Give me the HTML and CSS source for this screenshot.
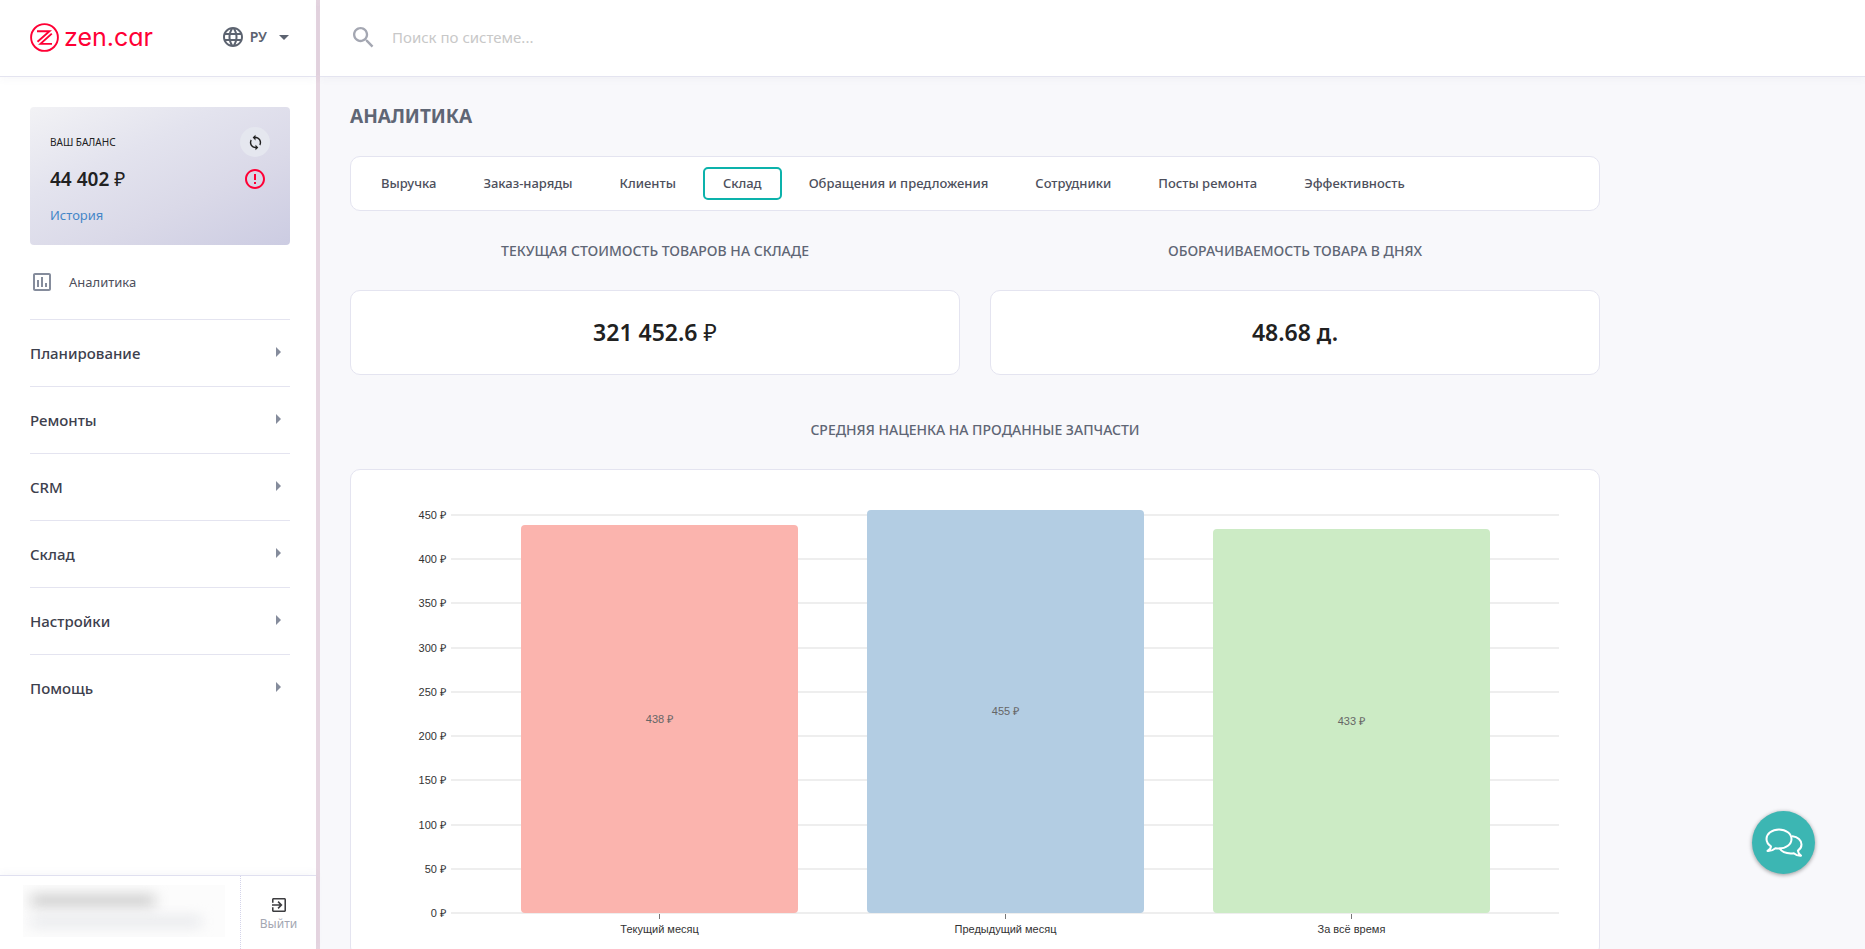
FILE: index.html
```html
<!DOCTYPE html>
<html lang="ru">
<head>
<meta charset="utf-8">
<meta name="viewport" content="width=device-width, initial-scale=1">
<title>Аналитика — zen.car</title>
<link rel="stylesheet" href="styles.css">
</head>
<body>
<div class="app">
  <aside class="sidebar">
    <header class="brand-bar">
      <a class="logo" href="#">
        <svg class="logo-mark" viewBox="0 0 29 29" fill="none" stroke="currentColor" stroke-width="1.9" aria-hidden="true">
          <circle cx="14.5" cy="14.5" r="13.4"/>
          <path d="M7 8.200H19.500L7.500 18.800M21.800 10.600L10.500 20.900H22"/>
        </svg>
        <span class="logo-text">zen.car</span>
      </a>
      <button class="lang" type="button">
        <svg class="lang-globe" viewBox="2 2 20 20" fill="currentColor" aria-hidden="true"><path d="M11.99 2C6.47 2 2 6.48 2 12s4.47 10 9.99 10C17.52 22 22 17.52 22 12S17.52 2 11.99 2zm6.93 6h-2.95c-.32-1.25-.78-2.45-1.38-3.56 1.84.63 3.37 1.91 4.33 3.56zM12 4.04c.83 1.2 1.48 2.53 1.91 3.96h-3.82c.43-1.43 1.08-2.76 1.91-3.96zM4.26 14C4.1 13.36 4 12.69 4 12s.1-1.36.26-2h3.38c-.08.66-.14 1.32-.14 2s.06 1.34.14 2H4.26zm.82 2h2.95c.32 1.25.78 2.45 1.38 3.56-1.84-.63-3.37-1.9-4.33-3.56zm2.95-8H5.08c.96-1.66 2.49-2.93 4.33-3.56C8.81 5.55 8.35 6.75 8.03 8zM12 19.96c-.83-1.2-1.48-2.53-1.91-3.96h3.82c-.43 1.43-1.08 2.76-1.91 3.96zM14.34 14H9.66c-.09-.66-.16-1.32-.16-2s.07-1.35.16-2h4.68c.09.65.16 1.32.16 2s-.07 1.34-.16 2zm.25 5.56c.6-1.11 1.06-2.31 1.38-3.56h2.95c-.96 1.65-2.49 2.93-4.33 3.56zM16.36 14c.08-.66.14-1.32.14-2s-.06-1.34-.14-2h3.38c.16.64.26 1.31.26 2s-.1 1.36-.26 2h-3.38z"/></svg>
        <span>РУ</span>
        <svg class="lang-caret" viewBox="0 0 10 5" fill="currentColor" aria-hidden="true"><path d="M0 0h10L5 5z"/></svg>
      </button>
    </header>

    <section class="balance">
      <div class="balance-row">
        <span class="balance-label">ВАШ БАЛАНС</span>
        <button class="refresh" type="button" aria-label="Обновить">
          <svg viewBox="0 0 24 24" fill="currentColor" aria-hidden="true"><path d="M12 4V1L8 5l4 4V6c3.31 0 6 2.69 6 6 0 1.01-.25 1.97-.7 2.8l1.46 1.46C19.54 15.03 20 13.57 20 12c0-4.42-3.58-8-8-8zm0 14c-3.31 0-6-2.69-6-6 0-1.01.25-1.97.7-2.8L5.24 7.74C4.46 8.97 4 10.43 4 12c0 4.42 3.58 8 8 8v3l4-4-4-4v3z"/></svg>
        </button>
      </div>
      <div class="balance-row">
        <strong class="balance-sum">44 402 <span class="rub">₽</span></strong>
        <svg class="alert" viewBox="2 2 20 20" fill="currentColor" aria-hidden="true"><path d="M11 15h2v2h-2zm0-8h2v6h-2zm.99-5C6.47 2 2 6.48 2 12s4.47 10 9.99 10C17.52 22 22 17.52 22 12S17.52 2 11.99 2zM12 20c-4.42 0-8-3.58-8-8s3.58-8 8-8 8 3.58 8 8-3.58 8-8 8z"/></svg>
      </div>
      <a class="history" href="#">История</a>
    </section>

    <nav class="menu">
      <a class="menu-current" href="#">
        <svg viewBox="3 3 18 18" fill="currentColor" aria-hidden="true"><path d="M19 3H5c-1.1 0-2 .9-2 2v14c0 1.1.9 2 2 2h14c1.1 0 2-.9 2-2V5c0-1.100-.9-2-2-2zm0 16H5V5h14v14zM7 10h2v7H7zm4-3h2v10h-2zm4 6h2v4h-2z"/></svg>
        <span>Аналитика</span>
      </a>
      <button class="menu-item" type="button"><span>Планирование</span><i class="arrow"></i></button>
      <button class="menu-item" type="button"><span>Ремонты</span><i class="arrow"></i></button>
      <button class="menu-item" type="button"><span>CRM</span><i class="arrow"></i></button>
      <button class="menu-item" type="button"><span>Склад</span><i class="arrow"></i></button>
      <button class="menu-item" type="button"><span>Настройки</span><i class="arrow"></i></button>
      <button class="menu-item" type="button"><span>Помощь</span><i class="arrow"></i></button>
    </nav>

    <footer class="account">
      <div class="account-user">
        <div class="hidden-name"></div>
        <div class="hidden-mail"></div>
      </div>
      <button class="logout" type="button">
        <svg viewBox="3 3 18 18" fill="currentColor" aria-hidden="true"><path d="M10.090 15.590L11.500 17l5-5-5-5-1.410 1.410L12.670 11H3v2h9.670l-2.580 2.590zM19 3H5c-1.110 0-2 .9-2 2v4h2V5h14v14H5v-4H3v4c0 1.100.89 2 2 2h14c1.100 0 2-.9 2-2V5c0-1.100-.9-2-2-2z"/></svg>
        <span>Выйти</span>
      </button>
    </footer>
  </aside>

  <div class="content">
    <header class="search-bar">
      <label class="search">
        <svg viewBox="3 3 18 18" fill="currentColor" aria-hidden="true"><path d="M15.500 14h-.79l-.28-.27C15.410 12.590 16 11.110 16 9.500 16 5.910 13.090 3 9.500 3S3 5.910 3 9.500 5.910 16 9.500 16c1.610 0 3.090-.59 4.230-1.570l.27.28v.79l5 4.990L20.490 19l-4.990-5zm-6 0C7.010 14 5 11.990 5 9.500S7.010 5 9.500 5 14 7.010 14 9.500 11.990 14 9.500 14z"/></svg>
        <input type="search" placeholder="Поиск по системе..." aria-label="Поиск по системе">
      </label>
    </header>

    <main class="page">
      <h1>АНАЛИТИКА</h1>
      <nav class="tabs panel">
        <a class="tab" href="#">Выручка</a>
        <a class="tab" href="#">Заказ-наряды</a>
        <a class="tab" href="#">Клиенты</a>
        <a class="tab tab-active" href="#">Склад</a>
        <a class="tab" href="#">Обращения и предложения</a>
        <a class="tab" href="#">Сотрудники</a>
        <a class="tab" href="#">Посты ремонта</a>
        <a class="tab" href="#">Эффективность</a>
      </nav>

      <div class="stats">
        <section>
          <h2>ТЕКУЩАЯ СТОИМОСТЬ ТОВАРОВ НА СКЛАДЕ</h2>
          <p class="stat panel">321 452.6 <span class="rub">₽</span></p>
        </section>
        <section>
          <h2>ОБОРАЧИВАЕМОСТЬ ТОВАРА В ДНЯХ</h2>
          <p class="stat panel">48.68 д.</p>
        </section>
      </div>

      <section class="markup">
        <h2>СРЕДНЯЯ НАЦЕНКА НА ПРОДАННЫЕ ЗАПЧАСТИ</h2>
        <div class="chart panel">
          <div class="plot">
            <div class="grid-row"><span>450 ₽</span></div>
            <div class="grid-row"><span>400 ₽</span></div>
            <div class="grid-row"><span>350 ₽</span></div>
            <div class="grid-row"><span>300 ₽</span></div>
            <div class="grid-row"><span>250 ₽</span></div>
            <div class="grid-row"><span>200 ₽</span></div>
            <div class="grid-row"><span>150 ₽</span></div>
            <div class="grid-row"><span>100 ₽</span></div>
            <div class="grid-row"><span>50 ₽</span></div>
            <div class="grid-row grid-zero"><span>0 ₽</span></div>
            <div class="bars">
              <div class="bar bar-red" style="height:97.33%">438 ₽</div>
              <div class="bar bar-blue" style="height:101.11%">455 ₽</div>
              <div class="bar bar-green" style="height:96.22%">433 ₽</div>
            </div>
          </div>
          <div class="axis">
            <span>Текущий месяц</span>
            <span>Предыдущий месяц</span>
            <span>За всё время</span>
          </div>
        </div>
      </section>
    </main>
  </div>

  <button class="chat" type="button" aria-label="Чат">
    <svg viewBox="0 0 38 30" fill="none" stroke="currentColor" stroke-width="2" stroke-linejoin="round" stroke-linecap="round" aria-hidden="true">
      <path d="M14 1.500C7 1.500 1.500 5.800 1.500 11c0 3 1.800 5.600 4.500 7.300-.2 1.900-1.500 3.600-3.500 4.700 3 .2 5.800-.9 7.900-2.800 1.200.3 2.400.4 3.600.4 7 0 12.500-4.200 12.500-9.600S21 1.500 14 1.500z"/>
      <path d="M27.500 8.300c5.200.6 9 4 9 8.200 0 2.500-1.400 4.700-3.600 6.200.2 2 1.300 3.800 3.100 5-2.800.2-5.300-.8-7.200-2.500-1 .2-2 .3-3 .3-5 0-9.300-1.900-11-4.900"/>
    </svg>
  </button>
</div>
</body>
</html>
```
FILE: styles.css
```css
* { box-sizing: border-box; }

body {
  margin: 0;
  font-family: "Noto Sans", "Open Sans", sans-serif;
  font-size: 13px;
  line-height: 20px;
  color: #212121;
  background: #f8f8fb;
}

h1, h2, p { margin: 0; }
a { color: inherit; text-decoration: none; }
svg { display: block; flex: none; }

button {
  font: inherit;
  color: inherit;
  padding: 0;
  border: 0;
  background: none;
  cursor: pointer;
}

.app {
  display: grid;
  grid-template-columns: 320px minmax(0, 1fr);
  height: 100vh;
  overflow: hidden;
}

/* Sidebar */
.sidebar {
  display: flex;
  flex-direction: column;
  min-height: 0;
  background: #fff;
  border-right: 4px solid #e6d6e1;
}

.brand-bar {
  display: flex;
  align-items: center;
  justify-content: space-between;
  height: 77px;
  padding: 0 27px 2px 30px;
  border-bottom: 1px solid #e4e4f0;
  box-shadow: 0 2px 8px rgba(100, 100, 140, .05);
}

.logo { display: flex; align-items: center; gap: 5px; color: #ff0035; }
.logo-mark { width: 29px; height: 29px; }
.logo-text { font-family: Inter, sans-serif; font-size: 25px; line-height: 28px; font-feature-settings: "cv11"; }

.lang { display: flex; align-items: center; gap: 7px; color: #5c6370; font-size: 14px; font-weight: 600; }
.lang-globe { width: 20px; height: 20px; }
.lang-caret { width: 10px; height: 5px; margin-left: 5px; }

.balance {
  margin: 30px 26px 0 30px;
  padding: 20px 20px 18px;
  border-radius: 4px;
  background: linear-gradient(155deg, #f2f2f5 0%, #e3e3ee 35%, #dad9e8 65%, #cccce2 100%);
}
.balance-row { display: flex; align-items: center; justify-content: space-between; }
.balance-label { font-size: 10px; }
.refresh { display: grid; place-items: center; width: 30px; height: 30px; border-radius: 50%; background: #e5e7ef; }
.refresh svg { width: 17px; height: 17px; }
.balance-sum { font-size: 19px; line-height: 44px; font-weight: 600; }
.rub { font-weight: 400; }
.alert { width: 20px; height: 20px; margin-right: 5px; color: #ff0035; }
.history { display: block; padding-top: 2px; line-height: 24px; color: #4486c8; }

.menu { flex: 1; padding: 0 26px 0 30px; overflow: hidden; }
.menu-current { display: flex; align-items: center; gap: 18px; height: 74px; padding-left: 3px; color: #4d4f5c; }
.menu-current svg { width: 18px; height: 18px; color: #858c9c; }
.menu-item {
  display: flex;
  align-items: center;
  justify-content: space-between;
  width: 100%;
  height: 67px;
  padding-right: 9px;
  border-top: 1px solid #e4e4f0;
  font-size: 15px;
  font-weight: 500;
  color: #3d404d;
}
.arrow { margin-bottom: 2px; border: 5px solid transparent; border-left-color: #858c9c; border-right: 0; }

.account { display: flex; height: 74px; border-top: 1px solid #e0e0f0; box-shadow: 0 -2px 8px rgba(100, 100, 140, .05); }
.account-user { flex: 1; margin: 9px 15px 12px 23px; padding: 11px 0 0 8px; background: #fcfcfc; overflow: hidden; }
.hidden-name { width: 124px; height: 9px; background: #bdbdbd; filter: blur(7px); }
.hidden-mail { width: 170px; height: 7px; margin-top: 13px; background: #dcdee3; filter: blur(7px); }
.logout {
  display: flex;
  flex-direction: column;
  align-items: center;
  gap: 3px;
  width: 76px;
  padding-top: 22px;
  border-left: 1px dotted #d4d4ea;
  font-size: 12px;
  line-height: 18px;
  color: #a4a7b2;
}
.logout svg { width: 14px; height: 14px; color: #3d3d40; }

/* Content */
.content { display: flex; flex-direction: column; min-height: 0; }

.search-bar {
  display: flex;
  flex: none;
  height: 77px;
  padding: 0 33px 2px;
  background: #fff;
  border-bottom: 1px solid #e4e4f0;
  box-shadow: 0 2px 8px rgba(100, 100, 140, .05);
}
.search { display: flex; flex: 1; align-items: center; gap: 18px; color: #a4a7b2; }
.search svg { width: 21px; height: 21px; }
.search input { flex: 1; padding: 0; border: 0; outline: 0; background: none; font: inherit; font-size: 15px; color: #212121; }
.search input::placeholder { color: #c8c8c8; opacity: 1; }

.page {
  flex: 1;
  min-height: 0;
  width: 100%;
  max-width: 1310px;
  padding: 26px 30px 30px;
  overflow-y: auto;
  scrollbar-width: none;
}
h1 { font-size: 19px; line-height: 26px; font-weight: 700; color: #5f6675; }
h2 { font-size: 14px; line-height: 20px; font-weight: 500; color: #5f6675; text-align: center; }

.panel { background: #fff; border: 1px solid #e4e4f0; border-radius: 10px; }

.tabs { display: flex; gap: 7px; margin-top: 27px; padding: 10px; }
.tab { padding: 4px 18px 5px; border: 2px solid transparent; border-radius: 5px; font-weight: 500; color: #4d4f5c; white-space: nowrap; }
.tab-active { border-color: #0cb2ab; }

.stats { display: grid; grid-template-columns: 1fr 1fr; gap: 30px; margin-top: 30px; }
.stat { margin-top: 29px; padding: 25px 20px 26px; font-size: 23px; line-height: 32px; font-weight: 600; text-align: center; }

.markup { margin-top: 45px; }
.chart {
  margin-top: 29px;
  padding: 44px 40px 20px 60px;
  font-family: "Liberation Sans", Arial, sans-serif;
  font-size: 11px;
  line-height: 14px;
  color: #333;
}
.plot { position: relative; padding-left: 40px; }
.grid-row { position: relative; height: 44px; border-top: 2px solid #eee; }
.grid-row:nth-child(4n + 3) { height: 45px; }
.grid-row span { position: absolute; top: -8px; right: 100%; margin-right: 5px; white-space: nowrap; }
.grid-row.grid-zero { height: 2px; }
.bars {
  position: absolute;
  inset: 0 0 1px 41px;
  display: flex;
  align-items: flex-end;
  justify-content: space-evenly;
}
.bar { display: grid; place-items: center; width: 25%; border-radius: 4px; color: #666; }
.bar-red { background: #fbb4ae; }
.bar-blue { background: #b3cde3; }
.bar-green { background: #ccebc5; }
.axis { display: flex; justify-content: space-evenly; padding-left: 41px; }
.axis span { display: flex; flex-direction: column; align-items: center; gap: 3px; width: 25%; white-space: nowrap; }
.axis span::before { content: ""; width: 1px; height: 5px; background: #777; }

/* Chat button */
.chat {
  position: fixed;
  right: 50px;
  bottom: 75px;
  display: grid;
  place-items: center;
  width: 63px;
  height: 63px;
  border-radius: 50%;
  color: #fff;
  background: #3cb6b3;
  box-shadow: 0 1px 4px rgba(0, 0, 0, .4);
}
.chat svg { width: 38px; height: 30px; }
```
